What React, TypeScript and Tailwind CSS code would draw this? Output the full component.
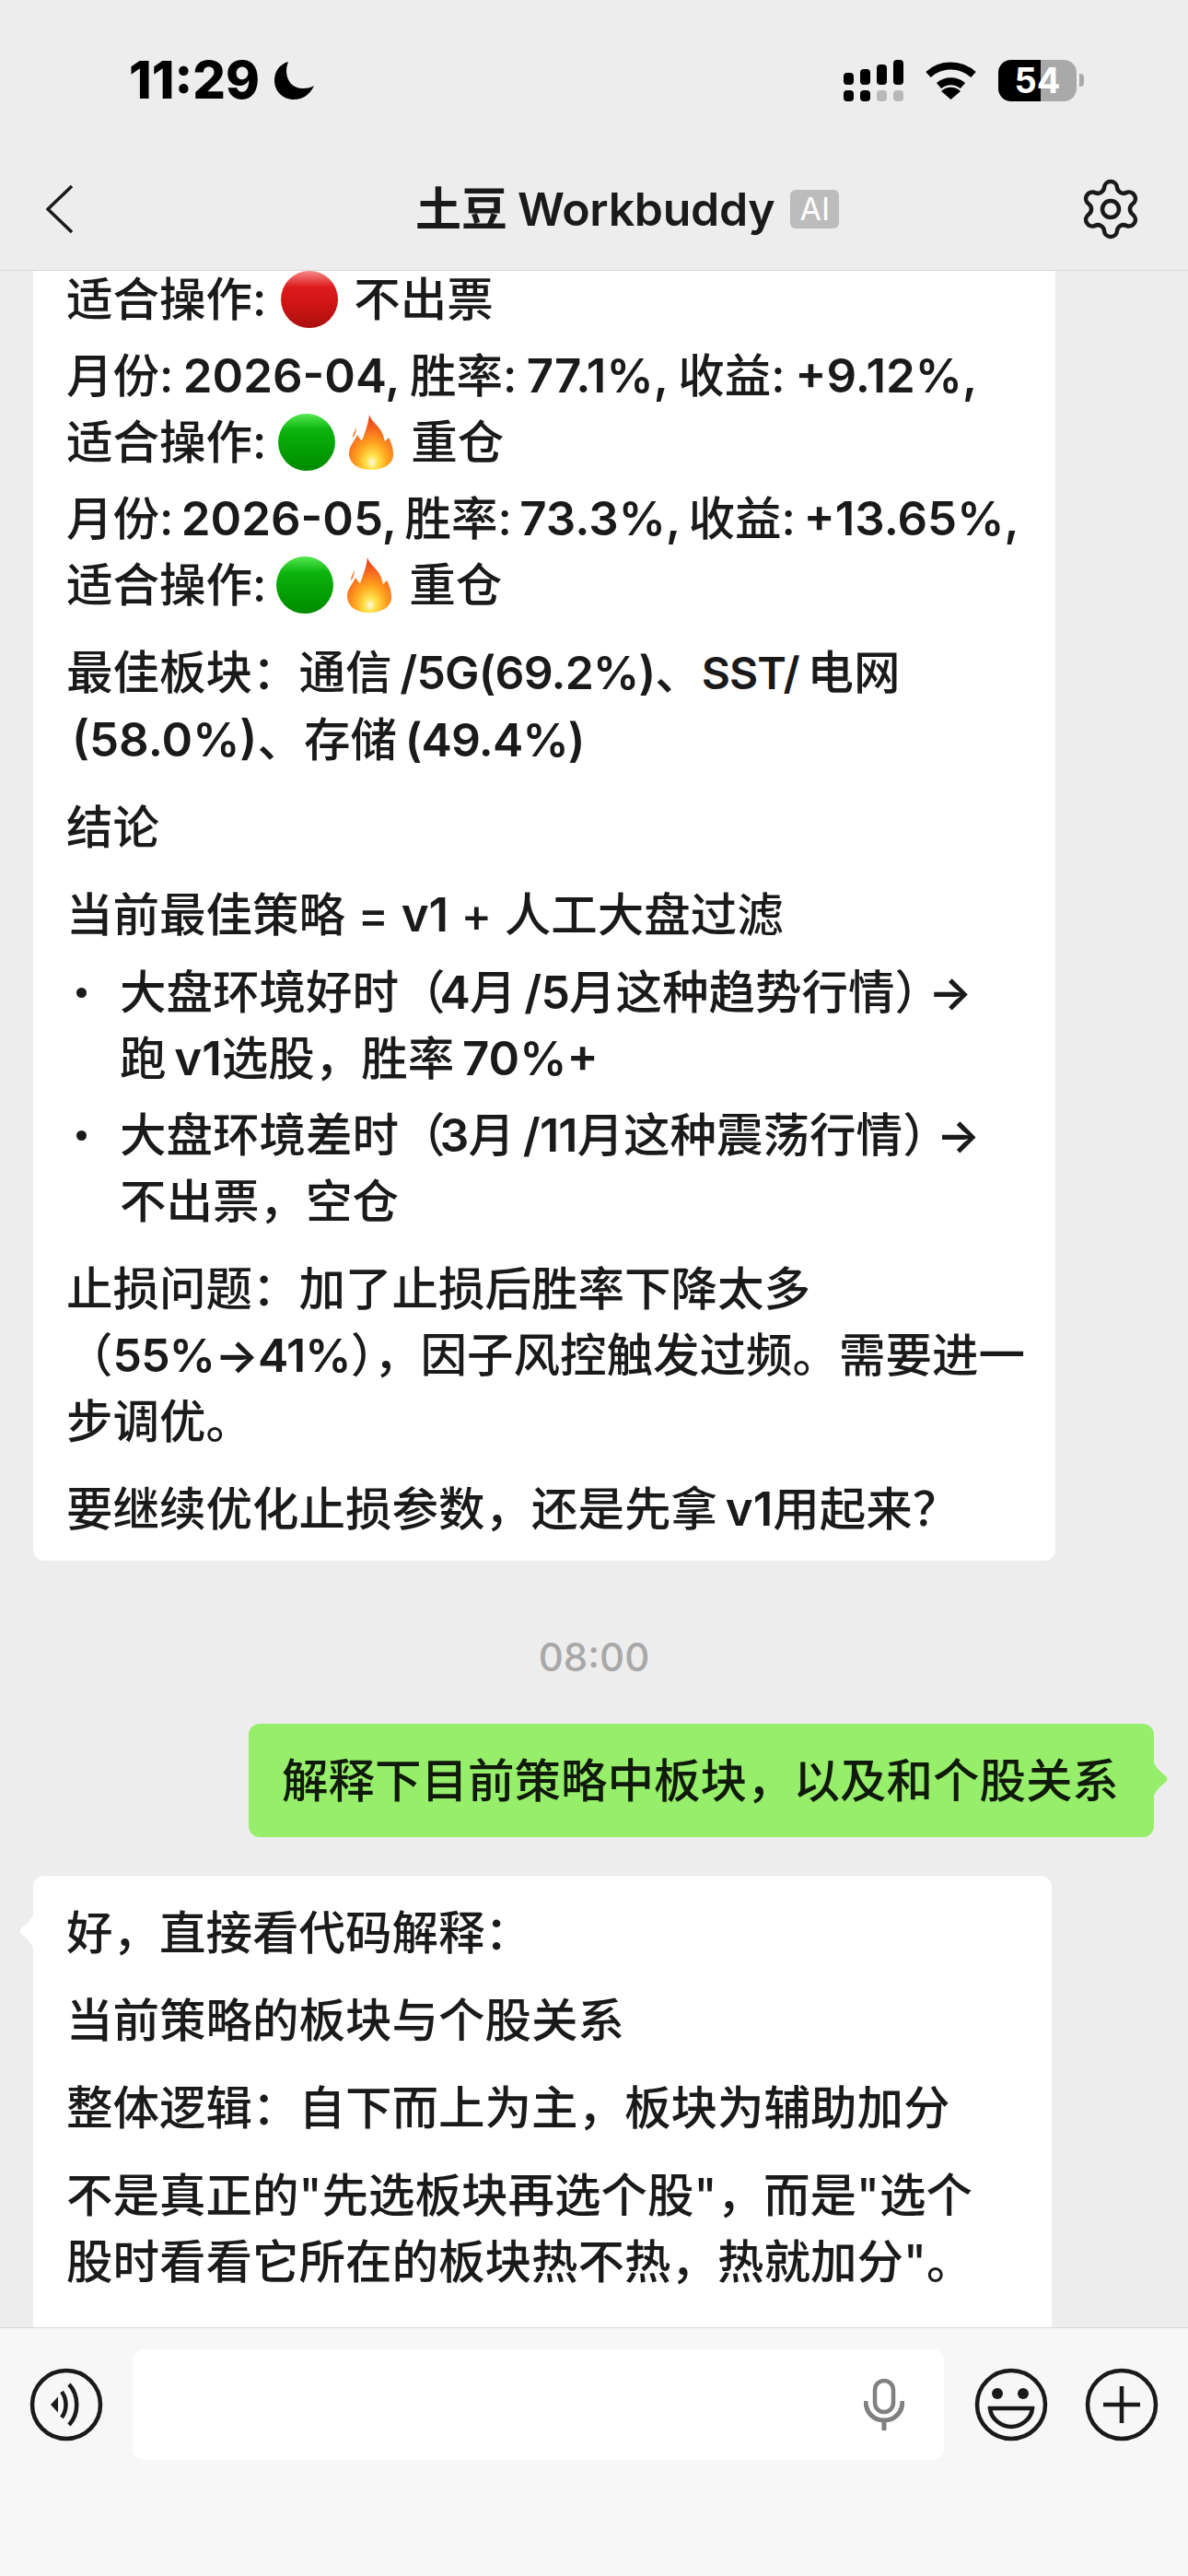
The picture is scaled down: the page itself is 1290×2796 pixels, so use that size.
import { Settings } from "lucide-react";
import type { ReactNode } from "react";

const CM = "\uFF0C";
const CO = "\uFF1A";
const LP = "\uFF08";
const RP = "\uFF09";
const Q = "\uFF1F";
const TS = "\u2009";

function Dot({ color }: { color: "red" | "green" }) {
  const stops =
    color === "red"
      ? ["#f68a8a", "#dd1c1c", "#d01414", "#a81010"]
      : ["#55ea50", "#0cb40e", "#04a204", "#008a00"];
  const id = `dot-${color}`;
  return (
    <svg viewBox="0 0 62 62" className="inline-block w-[62px] h-[62px] align-[-13px] ml-[2px]">
      <defs>
        <linearGradient id={id} x1="0" y1="0" x2="0" y2="1">
          <stop offset="0" stopColor={stops[0]} />
          <stop offset="0.28" stopColor={stops[1]} />
          <stop offset="0.6" stopColor={stops[2]} />
          <stop offset="1" stopColor={stops[3]} />
        </linearGradient>
      </defs>
      <circle cx="31" cy="31" r="31" fill={`url(#${id})`} />
    </svg>
  );
}

function Fire() {
  return (
    <svg viewBox="0 0 48 60" className="inline-block w-[48px] h-[60px] align-[-12px] ml-[15px]">
      <defs>
        <radialGradient id="fire" cx="0.52" cy="0.86" r="0.82">
          <stop offset="0" stopColor="#fffbe0" />
          <stop offset="0.16" stopColor="#ffe14a" />
          <stop offset="0.42" stopColor="#ffa51f" />
          <stop offset="0.72" stopColor="#f76a1e" />
          <stop offset="1" stopColor="#e8401a" />
        </radialGradient>
      </defs>
      <path
        fill="url(#fire)"
        d="M22 0C24 8 33 12 36 20C38 24 38 27 39 29C41 27 42 26 43 25C47 33 48 38 48 44C48 53 38 60 24 60C10 60 0 53 0 42C0 34 6 29 9 22C11 25 12 27 14 28C17 20 21 10 22 0Z"
      />
      <path fill="#f5762a" d="M8 13C7 18 4 20 4 25C6 23 8 19 8 13Z" />
    </svg>
  );
}

function L({ children }: { children: ReactNode }) {
  return <span className="text-[51px] font-semibold">{children}</span>;
}

function N({ children }: { children: ReactNode }) {
  return <span className="text-[50px] font-semibold tracking-[-0.8px]">{children}</span>;
}

function StatusBar() {
  const bars = [
    { h: "h-[13px]", low: "bg-black" },
    { h: "h-[17px]", low: "bg-black" },
    { h: "h-[22px]", low: "bg-[#b8b8b8]" },
    { h: "h-[27px]", low: "bg-[#b8b8b8]" },
  ];
  return (
    <div className="flex items-center h-[46px] mt-[64px] text-black">
      <span className="ml-[140px] text-[56px] leading-[46px] font-extrabold w-[152px]">11:29</span>
      <svg viewBox="0 0 43 41" className="w-[43px] h-[41px] ml-[6px]">
        <path d="M15 0C5 3 0 11 0 20C0 32 9 41 21 41C31 41 39 35 43 26C40 28 36 29 31 29C20 29 13 21 13 10C13 6 14 3 15 0Z" />
      </svg>
      <div className="ml-[575px] flex gap-[7px] h-[45px]">
        {bars.map((b, i) => (
          <div key={i} className="flex flex-col justify-end w-[11px] gap-[6px]">
            <div className={`${b.h} w-[11px] rounded-[4px] bg-black`} />
            <div className={`h-[12px] w-[11px] rounded-[4px] ${b.low}`} />
          </div>
        ))}
      </div>
      <svg viewBox="0 0 57 42" className="w-[57px] h-[42px] ml-[23px]">
        <g fill="none" stroke="#000" strokeWidth="8">
          <path d="M4 15A36 36 0 0 1 53 15" />
          <path d="M15.5 27A20 20 0 0 1 41.5 27" />
        </g>
        <path d="M28.5 42L18 33A15 15 0 0 1 39 33Z" />
      </svg>
      <div className="relative ml-[23px] flex h-[45px] w-[85px] rounded-[14px] overflow-hidden">
        <div className="w-[46px] bg-black" />
        <div className="flex-1 bg-[#a9a9a9]" />
        <span className="absolute inset-0 flex items-center justify-center text-white text-[38px] font-bold leading-none">54</span>
      </div>
      <div className="ml-[3px] h-[14px] w-[5px] rounded-r-[4px] bg-[#a9a9a9]" />
    </div>
  );
}

function NavBar() {
  return (
    <div className="flex items-center h-[60px] mt-[87px] text-[#1a1a1a]">
      <svg viewBox="0 0 29 52" className="w-[29px] h-[52px] ml-[50px]">
        <path d="M28 1L2 26L28 51" fill="none" stroke="#1a1a1a" strokeWidth="3.5" />
      </svg>
      <div className="flex items-center ml-[372px]">
        <span className="text-[50px] leading-[60px] font-semibold whitespace-nowrap">土豆</span>
        <span className="ml-[11px] text-[50px] leading-[60px] font-semibold tracking-[-0.3px] whitespace-nowrap">Workbuddy</span>
        <span className="ml-[17px] flex items-center justify-center w-[53px] h-[42px] rounded-[6px] bg-[#bcbcbc] text-white text-[34px] leading-none">AI</span>
      </div>
      <Settings className="ml-auto mr-[48px]" size={72} strokeWidth={1.5} color="#1a1a1a" />
    </div>
  );
}

function BubbleTail({ side, color }: { side: "left" | "right"; color: string }) {
  return side === "left" ? (
    <svg viewBox="0 0 16 44" className="absolute left-[-15px] top-[38px] w-[16px] h-[44px]">
      <path d="M16 0C15 8 8 14 2 19C0 21 0 23 2 25C8 30 15 36 16 44Z" fill={color} />
    </svg>
  ) : (
    <svg viewBox="0 0 16 44" className="absolute right-[-15px] top-[38px] w-[16px] h-[44px]">
      <path d="M0 0C1 8 8 14 14 19C16 21 16 23 14 25C8 30 1 36 0 44Z" fill={color} />
    </svg>
  );
}

function Bullet({ children }: { children: ReactNode }) {
  return (
    <div className="flex">
      <div className="w-[58px] shrink-0 pt-[31px] pl-[11px]">
        <div className="w-[11px] h-[11px] rounded-full bg-[#1a1a1a]" />
      </div>
      <div>{children}</div>
    </div>
  );
}

export default function App() {
  return (
    <div
      lang="zh-CN"
      className="flex flex-col w-[1290px] h-[2796px] overflow-hidden bg-[#ededed] font-['Inter','Noto_Sans_CJK_SC',sans-serif]"
    >
      <header className="h-[294px] shrink-0 bg-[#ededed] border-b border-[#d9d9d9]">
        <StatusBar />
        <NavBar />
      </header>

      <main className="flex-1 min-h-0 overflow-hidden text-[50.5px] leading-[72px] font-medium text-[#1a1a1a] whitespace-nowrap">
        <div className="ml-[36px] w-[1110px] -mt-[5px] bg-white rounded-b-[12px] px-[36px] pb-[20px] flex flex-col">
          <p>
            适合操作: <Dot color="red" /> <span className="ml-[4px]">不出票</span>
          </p>
          <p className="mt-[11px] [word-spacing:-3px]">
            月份: <L>2026-04,</L> 胜率: <L>77.1%,</L> 收益: <L>+9.12%,</L>
            <br />
            适合操作: <Dot color="green" />
            <Fire /> <span className="ml-[9px]">重仓</span>
          </p>
          <p className="mt-[11px] [word-spacing:-5px]">
            月份: <L>2026-05,</L> 胜率: <L>73.3%,</L> 收益: <L>+13.65%,</L>
            <br />
            适合操作: <Dot color="green" />
            <Fire /> <span className="ml-[11px]">重仓</span>
          </p>
          <p className="mt-[23px]">
            最佳板块{CO}通信{TS}<N>/5G(69.2%)</N>、<span className="text-[48px] font-semibold tracking-[-1px]">SST/</span>{TS}电网
            <br />
            <span className="ml-[6px]"><L>(58.0%)</L></span>、存储{TS}<N>(49.4%)</N>
          </p>
          <p className="mt-[23px]">结论</p>
          <p className="mt-[23px]">当前最佳策略 = <L>v1</L> + 人工大盘过滤</p>
          <div className="mt-[12px]">
            <Bullet>
              大盘环境好时<span className="tracking-[-6px]">{LP}</span><N>4</N>月{TS}<N>/5</N>月这种趋势行情<span className="tracking-[-14px]">{RP}</span><N>→</N>
              <br />
              跑{TS}<L>v1</L>选股{CM}胜率{TS}<L>70%+</L>
            </Bullet>
          </div>
          <div className="mt-[11px]">
            <Bullet>
              大盘环境差时<span className="tracking-[-6px]">{LP}</span><N>3</N>月{TS}<N>/11</N>月这种震荡行情<span className="tracking-[-14px]">{RP}</span><N>→</N>
              <br />
              不出票{CM}空仓
            </Bullet>
          </div>
          <p className="mt-[23px]">
            止损问题{CO}加了止损后胜率下降太多
            <br />
            {LP}<N>55%→41%</N>{RP}{CM}因子风控触发过频。需要进一
            <br />
            步调优。
          </p>
          <p className="mt-[23px]">要继续优化止损参数{CM}还是先拿{TS}<L>v1</L>用起来{Q}</p>
        </div>

        <div className="mt-[84px] h-[42px] flex items-center justify-center text-[42px] leading-[42px] text-[#a8a8a8]">
          08:00
        </div>

        <div className="mt-[51px] flex justify-end pr-[37px]">
          <div className="relative w-[983px] h-[123px] pl-[36px] flex items-center rounded-[12px] bg-[#96ee6a] text-[#0f1a0a]">
            解释下目前策略中板块{CM}以及和个股关系
            <BubbleTail side="right" color="#96ee6a" />
          </div>
        </div>

        <div className="relative mt-[42px] ml-[36px] w-[1106px] bg-white rounded-t-[12px] pt-[26px] px-[36px] pb-[200px] flex flex-col">
          <BubbleTail side="left" color="#ffffff" />
          <p>好{CM}直接看代码解释{CO}</p>
          <p className="mt-[23px]">当前策略的板块与个股关系</p>
          <p className="mt-[23px]">整体逻辑{CO}自下而上为主{CM}板块为辅助加分</p>
          <p className="mt-[23px]">
            不是真正的"先选板块再选个股"{CM}而是"选个
            <br />
            股时看看它所在的板块热不热{CM}热就加分"。
          </p>
        </div>
      </main>

      <footer className="h-[270px] shrink-0 bg-[#f7f7f7] border-t border-[#d9d9d9] pt-[23px] flex items-start">
        <svg viewBox="0 0 80 80" className="w-[80px] h-[80px] ml-[32px] mt-[20px]">
          <circle cx="40" cy="40" r="37" fill="none" stroke="#1a1a1a" strokeWidth="4.5" />
          <path d="M23 40L31 31.5V48.5Z" fill="#1a1a1a" />
          <path d="M35 26C41 34 41 46 35 54" fill="none" stroke="#1a1a1a" strokeWidth="4.5" />
          <path d="M43 18C54 30 54 50 43 62" fill="none" stroke="#1a1a1a" strokeWidth="4.5" />
        </svg>
        <div className="ml-[32px] w-[881px] h-[120px] rounded-[12px] bg-white flex items-center justify-end">
          <svg viewBox="0 0 44 56" className="w-[44px] h-[56px] mr-[43px]">
            <rect x="12" y="2" width="20" height="34" rx="10" fill="none" stroke="#808080" strokeWidth="4.5" />
            <path d="M2 24C2 36 10 45 22 45C34 45 42 36 42 24" fill="none" stroke="#808080" strokeWidth="5" />
            <path d="M22 45V56" stroke="#808080" strokeWidth="5" />
          </svg>
        </div>
        <svg viewBox="0 0 80 80" className="w-[80px] h-[80px] ml-[33px] mt-[20px]">
          <circle cx="40" cy="40" r="37" fill="none" stroke="#1a1a1a" strokeWidth="4.5" />
          <circle cx="25" cy="28" r="6" fill="#1a1a1a" />
          <circle cx="53" cy="28" r="6" fill="#1a1a1a" />
          <path d="M17 44H63C62 56 50 64 40 64C30 64 18 56 17 44Z" fill="none" stroke="#1a1a1a" strokeWidth="4.5" />
        </svg>
        <svg viewBox="0 0 80 80" className="w-[80px] h-[80px] ml-[40px] mt-[20px]">
          <circle cx="40" cy="40" r="37" fill="none" stroke="#1a1a1a" strokeWidth="4.5" />
          <path d="M40 20V60M20 40H60" fill="none" stroke="#1a1a1a" strokeWidth="4.5" />
        </svg>
      </footer>
    </div>
  );
}
